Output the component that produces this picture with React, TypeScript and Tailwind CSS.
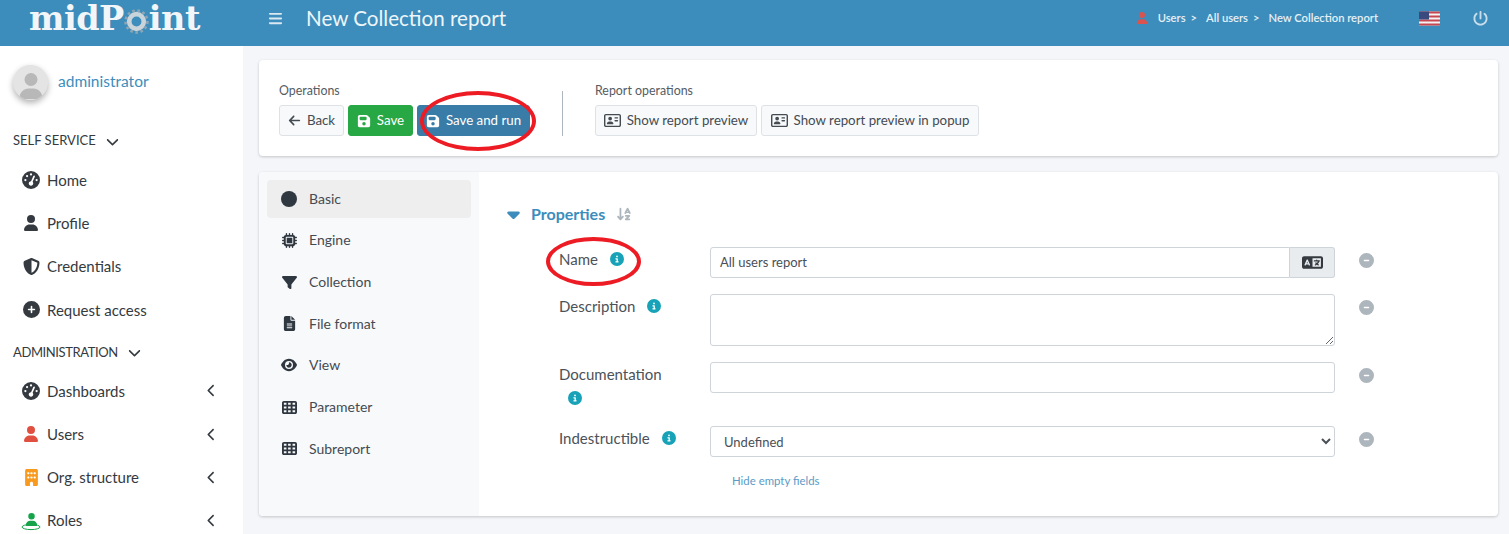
import type { ReactNode } from "react";
import {
  FaArrowDownAZ,
  FaArrowLeft,
  FaBars,
  FaBuilding,
  FaCaretDown,
  FaChevronDown,
  FaChevronLeft,
  FaCircle,
  FaCircleInfo,
  FaCircleMinus,
  FaCirclePlus,
  FaEye,
  FaFileLines,
  FaFilter,
  FaFloppyDisk,
  FaGaugeHigh,
  FaLanguage,
  FaMicrochip,
  FaPowerOff,
  FaRegAddressCard,
  FaShieldHalved,
  FaTableCells,
  FaUser,
} from "react-icons/fa6";

const Gear = () => (
  <svg viewBox="0 0 24 24" className="w-[25px] h-[25px] mt-[5px]">
    <circle cx="12" cy="12" r="7" fill="none" stroke="#c9d3da" strokeWidth="4.5" />
    <circle cx="12" cy="12" r="10.5" fill="none" stroke="#8fa5b3" strokeWidth="2.5" strokeDasharray="2.5 2.5" />
  </svg>
);

const Flag = () => (
  <svg viewBox="0 0 21 14" className="w-[21px] h-[15px]">
    <rect width="21" height="14" fill="#f4f4f4" />
    <rect y="0" width="21" height="2" fill="#c8464f" />
    <rect y="4" width="21" height="2" fill="#c8464f" />
    <rect y="8" width="21" height="2" fill="#c8464f" />
    <rect y="12" width="21" height="2" fill="#c8464f" />
    <rect width="10" height="8" fill="#3b4a7e" />
  </svg>
);

const RolesIcon = () => (
  <span className="relative flex items-center justify-center w-[18px] h-[18px]">
    <FaUser size={13} className="text-[#16a34a] -mt-[3px]" />
    <svg viewBox="0 0 20 8" className="absolute bottom-[-1px] left-[-1px] w-[20px] h-[8px]">
      <ellipse cx="10" cy="4" rx="9" ry="2.6" fill="none" stroke="#16a34a" strokeWidth="1" />
    </svg>
  </span>
);

const NavItem = ({ icon, label, arrow }: { icon: ReactNode; label: string; arrow?: boolean }) => (
  <div className="flex items-center h-[43.2px] pl-[22px] pr-[25px] text-[#343a40]">
    <span className="flex justify-center w-[18px]">{icon}</span>
    <span className="ml-[7px] flex-1 text-[15px]">{label}</span>
    {arrow && <FaChevronLeft size={13} className="text-[#343a40]" />}
  </div>
);

const SectionTitle = ({ label, className }: { label: string; className?: string }) => (
  <div className={`flex items-center gap-[10px] pl-[13px] h-[22px] text-[13px] text-[#343a40] ${className ?? ""}`}>
    {label}
    <FaChevronDown size={13} />
  </div>
);

const Sidebar = () => (
  <aside className="w-[243px] shrink-0 bg-white">
    <div className="flex items-center h-[72px] pl-[13px]">
      <span className="flex items-end justify-center w-[35px] h-[35px] rounded-full bg-[#e4e4e4] shadow-[0_3px_6px_rgba(0,0,0,0.3)] overflow-hidden">
        <FaUser size={26} className="text-[#b8b8b8] mb-[1px]" />
      </span>
      <span className="ml-[10px] text-[15.5px] text-[#3c8dbc]">administrator</span>
    </div>
    <div className="mt-[12px]">
      <SectionTitle label="SELF SERVICE" />
    </div>
    <div className="mt-[6.6px]">
      <NavItem icon={<FaGaugeHigh size={18} />} label="Home" />
      <NavItem icon={<FaUser size={16} />} label="Profile" />
      <NavItem icon={<FaShieldHalved size={17} />} label="Credentials" />
      <NavItem icon={<FaCirclePlus size={17} />} label="Request access" />
    </div>
    <div className="mt-[10px]">
      <SectionTitle label="ADMINISTRATION" className="tracking-[-0.4px]" />
    </div>
    <div className="mt-[6px]">
      <NavItem icon={<FaGaugeHigh size={18} />} label="Dashboards" arrow />
      <NavItem icon={<FaUser size={16} className="text-[#e04f3f]" />} label="Users" arrow />
      <NavItem icon={<FaBuilding size={17} className="text-[#f79a1e]" />} label="Org. structure" arrow />
      <NavItem icon={<RolesIcon />} label="Roles" arrow />
    </div>
  </aside>
);

const Header = () => (
  <header className="flex items-center h-[46px] pb-[9px] bg-[#3c8dbc] text-white shrink-0">
    <div className="w-[268px] shrink-0 pl-[29px] flex items-center text-[33.5px] leading-none font-bold font-['DejaVu_Serif',serif] text-[#f2f6f9]">
      <span className="tracking-[-0.5px]">midP</span>
      <Gear />
      <span className="tracking-[-0.5px]">int</span>
    </div>
    <FaBars size={15} className="text-[#dbe8f1]" />
    <h1 className="ml-[23px] text-[20.6px] text-[#eef5f9]">New Collection report</h1>
    <div className="ml-auto flex items-center text-[11.2px] font-semibold text-[#e6f0f6]">
      <FaUser size={12} className="text-[#d9534f] mr-[10px]" />
      <span>Users</span>
      <span className="ml-[5px] mr-[9px]">&gt;</span>
      <span>All users</span>
      <span className="ml-[5px] mr-[9px]">&gt;</span>
      <span>New Collection report</span>
    </div>
    <span className="ml-[41px]">
      <Flag />
    </span>
    <FaPowerOff size={15} className="ml-[33px] mr-[21px] text-[#c9deeb]" />
  </header>
);

const ActionButton = ({ icon, label, className }: { icon: ReactNode; label: string; className: string }) => (
  <button
    className={`flex items-center justify-center gap-[6px] h-[31px] rounded-[3px] border text-[13.3px] whitespace-nowrap ${className}`}
  >
    {icon}
    {label}
  </button>
);

const Operations = () => (
  <section className="flex items-start bg-white rounded-[4px] shadow-[0_1px_3px_rgba(0,0,0,0.2)] h-[96px] pt-[24px] pl-[20px]">
    <div>
      <div className="text-[12.4px] leading-[14px] mb-[7px] text-[#555c63]">Operations</div>
      <div className="flex gap-[4px]">
        <ActionButton
          icon={<FaArrowLeft size={13} />}
          label="Back"
          className="w-[65px] bg-[#f8f9fa] border-[#dee2e6] text-[#444b52]"
        />
        <ActionButton
          icon={<FaFloppyDisk size={14} />}
          label="Save"
          className="w-[65px] bg-[#28a745] border-[#28a745] text-white"
        />
        <div className="relative">
          <ActionButton
            icon={<FaFloppyDisk size={14} />}
            label="Save and run"
            className="w-[113px] bg-[#3a7ca8] border-[#3a7ca8] text-white"
          />
          <span className="absolute left-[3px] top-[-14px] w-[116px] h-[60px] rounded-[50%] border-[4px] border-[#ed1c24]" />
        </div>
      </div>
    </div>
    <div className="w-px h-[45px] bg-[#adb5bd] ml-[32px] mt-[7px]" />
    <div className="ml-[32px]">
      <div className="text-[12.4px] leading-[14px] mb-[7px] text-[#555c63]">Report operations</div>
      <div className="flex gap-[4px]">
        <ActionButton
          icon={<FaRegAddressCard size={17} />}
          label="Show report preview"
          className="w-[162px] bg-[#f8f9fa] border-[#dee2e6] text-[#444b52]"
        />
        <ActionButton
          icon={<FaRegAddressCard size={17} />}
          label="Show report preview in popup"
          className="w-[218px] bg-[#f8f9fa] border-[#dee2e6] text-[#444b52]"
        />
      </div>
    </div>
  </section>
);

const tabs = [
  { icon: <FaCircle size={16} />, label: "Basic", active: true },
  { icon: <FaMicrochip size={15} />, label: "Engine" },
  { icon: <FaFilter size={15} />, label: "Collection" },
  { icon: <FaFileLines size={15} />, label: "File format" },
  { icon: <FaEye size={16} />, label: "View" },
  { icon: <FaTableCells size={15} />, label: "Parameter" },
  { icon: <FaTableCells size={15} />, label: "Subreport" },
];

const Tabs = () => (
  <nav className="w-[220px] shrink-0 bg-[#f8f9fa] pt-[7.8px] px-[8px] rounded-l-[4px]">
    {tabs.map((tab) => (
      <div
        key={tab.label}
        className={`flex items-center h-[38px] mb-[3.67px] pl-[14px] rounded-[4px] text-[14px] text-[#444b52] ${
          tab.active ? "bg-[#eeeeee]" : ""
        }`}
      >
        <span className="flex justify-center w-[16px] text-[#2f3740]">{tab.icon}</span>
        <span className="ml-[12px] -mt-[1px]">{tab.label}</span>
      </div>
    ))}
  </nav>
);

const Info = ({ className }: { className?: string }) => (
  <FaCircleInfo size={14} className={`text-[#17a2b8] inline-block ${className ?? ""}`} />
);

const FormRow = ({ label, control }: { label: ReactNode; control: ReactNode }) => (
  <div className="flex mb-[16px]">
    <div className="w-[151px] shrink-0 text-[15px] leading-[24px] text-[#4b5259] pr-[20px]">{label}</div>
    <div className="w-[625px] shrink-0">{control}</div>
    <FaCircleMinus size={15} className="ml-[24px] mt-[5.5px] text-[#adb5bd]" />
  </div>
);

const fieldClass = "block w-full border border-[#ced4da] rounded-[3px] bg-white text-[13px] text-[#495057] outline-none";

const Properties = () => (
  <div className="flex-1 pl-[29px] pt-[33px]">
    <div className="flex items-center h-[20px] -mt-[1px] text-[16px] font-bold text-[#3c8dbc]">
      <FaCaretDown size={20} className="w-[23px] -ml-[6px] mr-[6px]" />
      <span>Properties</span>
      <FaArrowDownAZ size={16} className="ml-[11px] text-[#adb5bd]" />
    </div>
    <div className="ml-[51px] mt-[23px]">
      <FormRow
        label={
          <span className="relative inline-flex items-center">
            Name
            <Info className="ml-[12px]" />
            <span className="absolute left-[-13px] top-[-10px] w-[95px] h-[49px] rounded-[50%] border-[4px] border-[#ed1c24]" />
          </span>
        }
        control={
          <div className="flex h-[31px]">
            <input
              readOnly
              value="All users report"
              className={`${fieldClass} flex-1 rounded-r-none px-[9px]`}
            />
            <span className="flex items-center justify-center w-[45px] border border-l-0 border-[#ced4da] rounded-r-[3px] bg-[#e9ecef]">
              <FaLanguage size={21} className="text-[#343a40]" />
            </span>
          </div>
        }
      />
      <FormRow
        label={
          <span className="inline-flex items-center">
            Description
            <Info className="ml-[12px]" />
          </span>
        }
        control={<textarea className={`${fieldClass} h-[52px]`} />}
      />
      <FormRow
        label={
          <>
            Documentation
            <span className="flex items-center h-[24px]">
              <Info className="ml-[9px]" />
            </span>
          </>
        }
        control={<input readOnly className={`${fieldClass} h-[31px]`} />}
      />
      <FormRow
        label={
          <span className="inline-flex items-center">
            Indestructible
            <Info className="ml-[12px]" />
          </span>
        }
        control={
          <select className={`${fieldClass} h-[31px] px-[9px]`} defaultValue="Undefined">
            <option>Undefined</option>
          </select>
        }
      />
      <div className="ml-[173px] mt-[3px] text-[11.4px] leading-[16px] text-[#5b9bc6]">Hide empty fields</div>
    </div>
  </div>
);

export default function App() {
  return (
    <div className="flex flex-col h-[534px] overflow-hidden bg-[#f4f6f9] font-['Lato','Noto_Sans',sans-serif]">
      <Header />
      <div className="flex flex-1 min-h-0">
        <Sidebar />
        <main className="flex-1 pl-[16px] pr-[11px] pt-[14px]">
          <Operations />
          <section className="flex mt-[16px] h-[344px] bg-white rounded-[4px] shadow-[0_1px_3px_rgba(0,0,0,0.2)]">
            <Tabs />
            <Properties />
          </section>
        </main>
      </div>
    </div>
  );
}
